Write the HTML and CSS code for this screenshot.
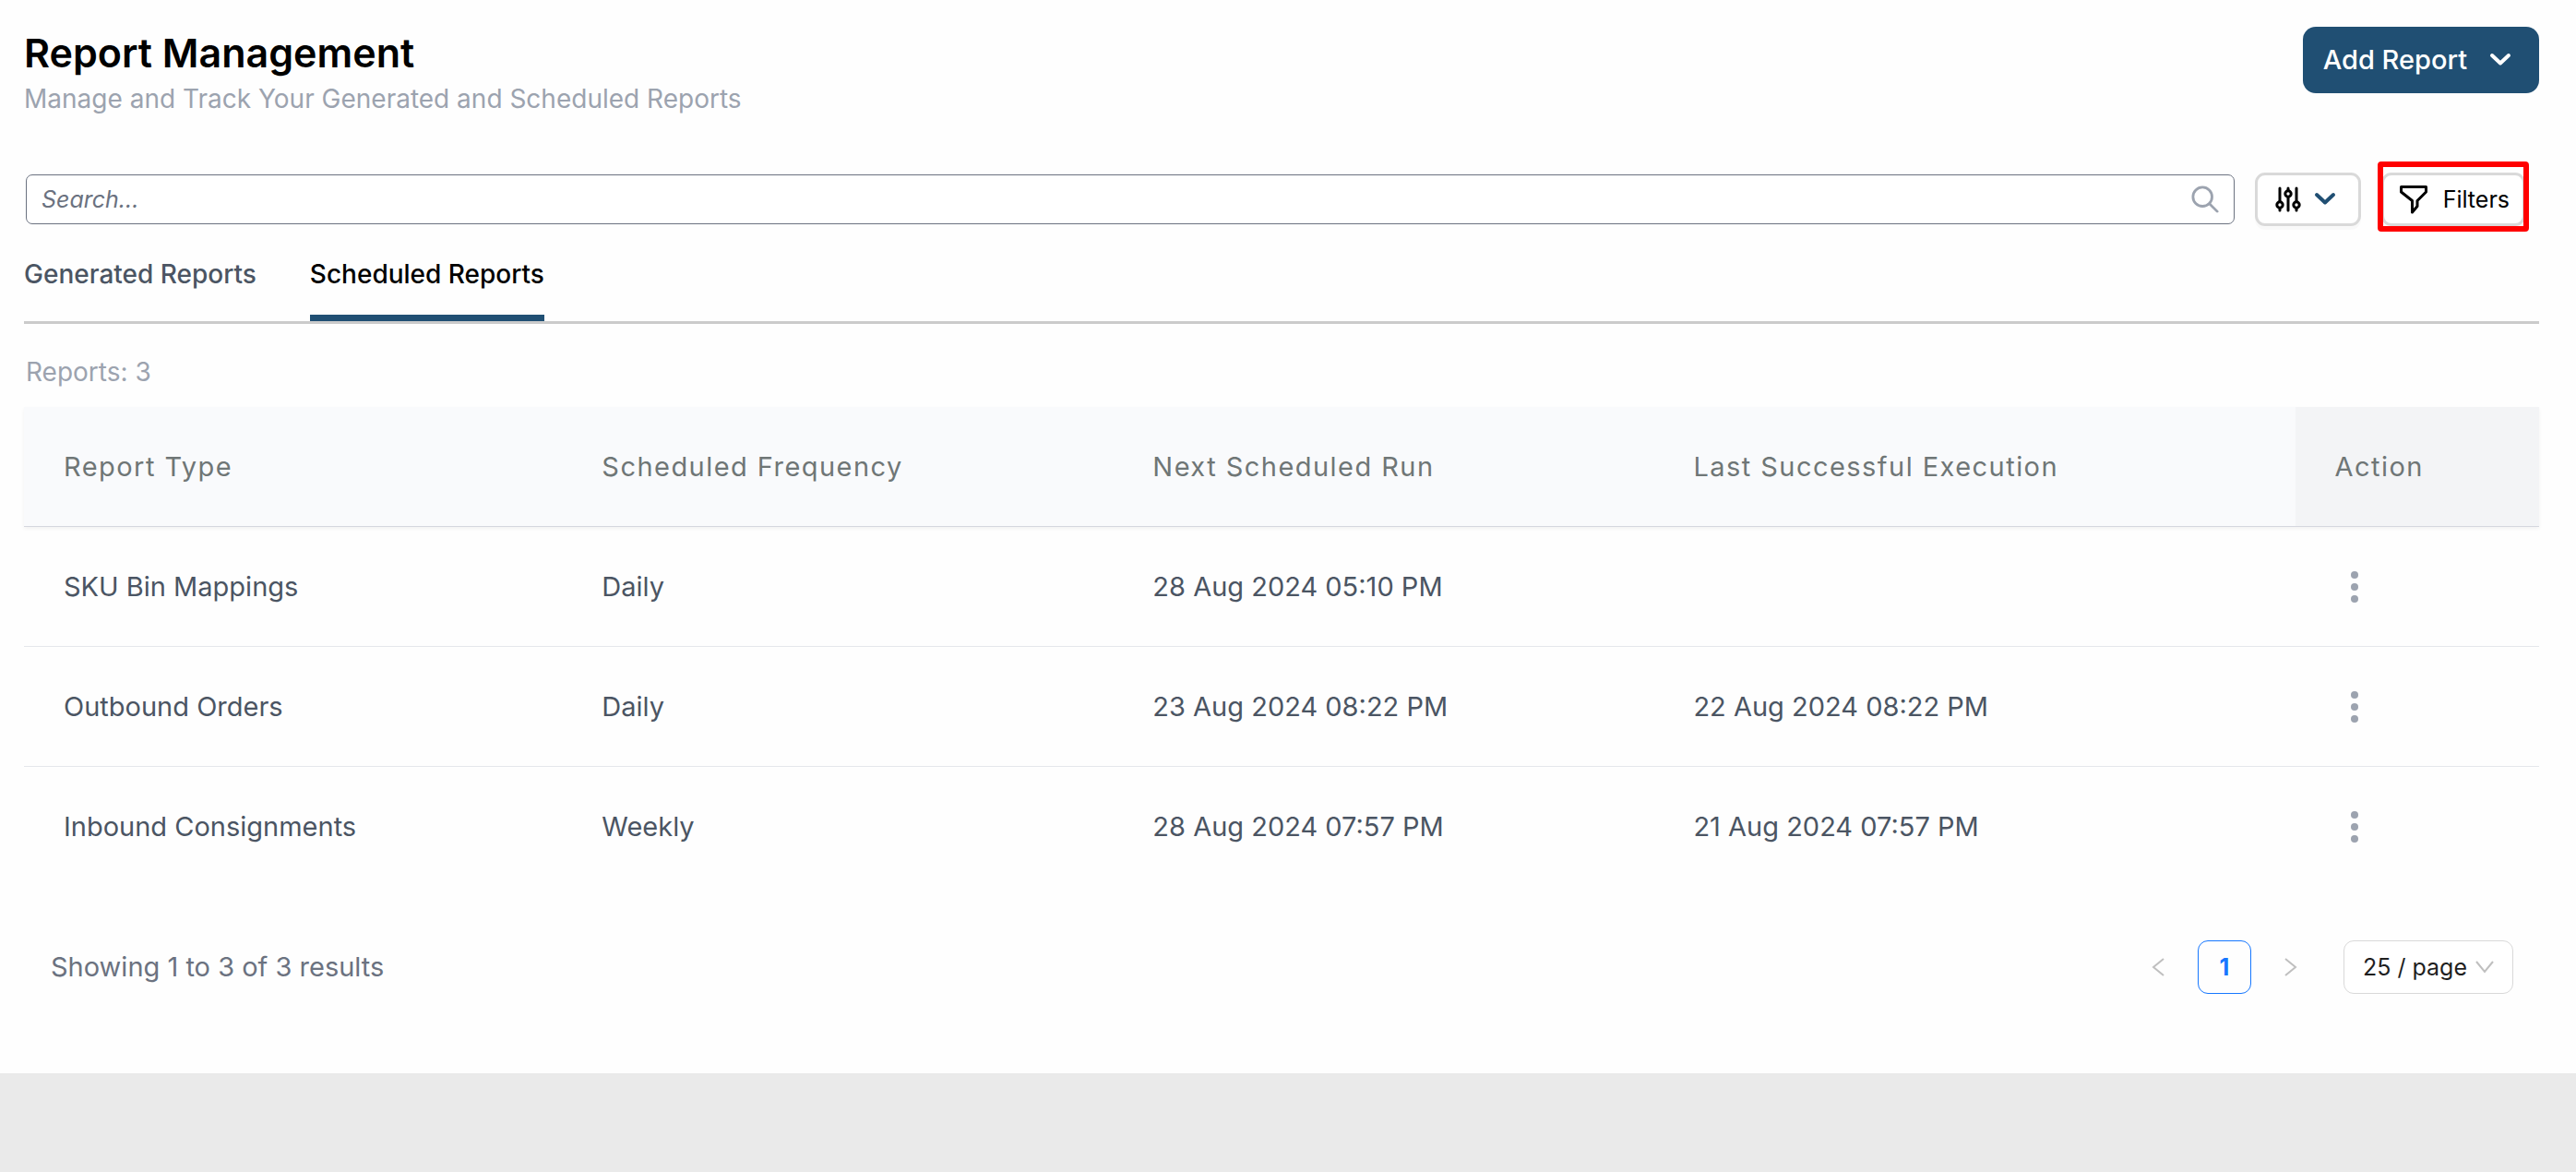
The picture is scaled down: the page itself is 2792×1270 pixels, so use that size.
FILE: index.html
```html
<!DOCTYPE html>
<html lang="en">
<head>
<meta charset="utf-8">
<meta name="viewport" content="width=device-width, initial-scale=1">
<title>Report Management</title>
<link rel="stylesheet" href="styles.css">
</head>
<body>
<main class="page">
  <header class="page-header">
    <div class="heading">
      <h1 class="title">Report Management</h1>
      <p class="subtitle">Manage and Track Your Generated and Scheduled Reports</p>
    </div>
    <button class="add-button" type="button">
      Add Report
      <svg class="chevron" viewBox="0 0 24 16" aria-hidden="true"><path d="M3 3l9 8.500 9-8.500"/></svg>
    </button>
  </header>

  <div class="toolbar">
    <label class="search">
      <input class="search-input" type="search" placeholder="Search..." aria-label="Search reports">
      <svg class="search-icon" viewBox="0 0 32 32" aria-hidden="true"><circle cx="13" cy="13" r="11"/><path d="M21 21l9 9"/></svg>
    </label>
    <button class="tool-button columns-button" type="button" aria-label="Columns">
      <svg class="sliders-icon" viewBox="0 0 28 28" aria-hidden="true">
        <path d="M5 2v14.500M5 23.500V26M14 2v2.500M14 11.500V26M23 2v14.500M23 23.500V26"/>
        <circle cx="5" cy="20" r="3.200"/><circle cx="14" cy="8" r="3.200"/><circle cx="23" cy="20" r="3.200"/>
      </svg>
      <svg class="chevron chevron-blue" viewBox="0 0 24 16" aria-hidden="true"><path d="M3 3l9 8.500 9-8.500"/></svg>
    </button>
    <div class="filters-wrap">
      <button class="tool-button filters-button" type="button">
        <svg class="funnel-icon" viewBox="0 0 32 32" aria-hidden="true"><path d="M2.500 2.500h27v5.500l-9.500 9.500v6l-5.500 6.500v-12.500l-12-9.500z"/></svg>
        Filters
      </button>
      <span class="highlight"></span>
    </div>
  </div>

  <nav class="tabs">
    <a class="tab" href="#generated">Generated Reports</a>
    <a class="tab tab-active" href="#scheduled" aria-current="page">Scheduled Reports</a>
  </nav>

  <p class="count">Reports: 3</p>

  <table class="reports">
    <colgroup><col class="col-type"><col class="col-frequency"><col class="col-next"><col class="col-last"><col class="col-action"></colgroup>
    <thead>
      <tr><th>Report Type</th><th>Scheduled Frequency</th><th>Next Scheduled Run</th><th>Last Successful Execution</th><th class="action-head">Action</th></tr>
    </thead>
    <tbody>
      <tr><td>SKU Bin Mappings</td><td>Daily</td><td>28 Aug 2024 05:10 PM</td><td></td>
        <td><button class="row-menu" type="button" aria-label="Actions for SKU Bin Mappings"><svg class="dots" viewBox="0 0 8 34" aria-hidden="true"><circle cx="4" cy="4" r="4"/><circle cx="4" cy="17" r="4"/><circle cx="4" cy="30" r="4"/></svg></button></td></tr>
      <tr><td>Outbound Orders</td><td>Daily</td><td>23 Aug 2024 08:22 PM</td><td>22 Aug 2024 08:22 PM</td>
        <td><button class="row-menu" type="button" aria-label="Actions for Outbound Orders"><svg class="dots" viewBox="0 0 8 34" aria-hidden="true"><circle cx="4" cy="4" r="4"/><circle cx="4" cy="17" r="4"/><circle cx="4" cy="30" r="4"/></svg></button></td></tr>
      <tr><td>Inbound Consignments</td><td>Weekly</td><td>28 Aug 2024 07:57 PM</td><td>21 Aug 2024 07:57 PM</td>
        <td><button class="row-menu" type="button" aria-label="Actions for Inbound Consignments"><svg class="dots" viewBox="0 0 8 34" aria-hidden="true"><circle cx="4" cy="4" r="4"/><circle cx="4" cy="17" r="4"/><circle cx="4" cy="30" r="4"/></svg></button></td></tr>
    </tbody>
  </table>

  <footer class="table-footer">
    <p class="results">Showing 1 to 3 of 3 results</p>
    <div class="pager">
      <button class="page-arrow" type="button" aria-label="Previous page" disabled><svg class="arrow-icon" viewBox="0 0 14 20" aria-hidden="true"><path d="M13 1L2 10l11 9"/></svg></button>
      <button class="page-number" type="button" aria-current="page">1</button>
      <button class="page-arrow" type="button" aria-label="Next page" disabled><svg class="arrow-icon" viewBox="0 0 14 20" aria-hidden="true"><path d="M1 1l11 9L1 19"/></svg></button>
      <div class="page-size">
        <select class="page-select" aria-label="Rows per page"><option>25 / page</option><option>50 / page</option><option>100 / page</option></select>
        <svg class="select-arrow" viewBox="0 0 20 14" aria-hidden="true"><path d="M1 1l9 11 9-11"/></svg>
      </div>
    </div>
  </footer>
</main>
</body>
</html>
```
FILE: styles.css
```css
* {
  box-sizing: border-box;
}

body {
  margin: 0;
  background: #eaeaea;
  color: #000;
  font-family: Inter, "Liberation Sans", sans-serif;
  font-size: 29px;
  line-height: 44px;
}

h1,
p {
  margin: 0;
}

button,
input,
select {
  margin: 0;
  color: inherit;
  font: inherit;
}

svg {
  display: block;
  flex: none;
  fill: none;
  stroke: currentColor;
}

.page {
  padding: 29px 40px 86px 26px;
  background: #fefefe;
}

.page-header {
  display: flex;
  justify-content: space-between;
  align-items: flex-start;
  margin-bottom: 58px;
}

.title {
  font-size: 43px;
  font-weight: 600;
  line-height: 56px;
}

.subtitle {
  color: #9ca3af;
  font-size: 28px;
}

.add-button {
  display: flex;
  align-items: center;
  gap: 24px;
  height: 72px;
  padding: 0 30px 0 22px;
  border: 0;
  border-radius: 14px;
  background: #204f73;
  color: #fff;
  font-weight: 500;
}

.chevron {
  width: 24px;
  height: 16px;
  stroke-width: 4;
  stroke-linecap: round;
  stroke-linejoin: round;
}

.chevron-blue {
  color: #204f73;
}

.toolbar {
  display: flex;
  align-items: center;
  gap: 22px;
  padding: 0 15px 0 2px;
}

.search {
  display: flex;
  flex: 1;
  align-items: center;
  height: 54px;
  padding: 0 16px;
  border: 1px solid #6b7280;
  border-radius: 7px;
  background: #fff;
}

.search-input {
  flex: 1;
  min-width: 0;
  padding: 0;
  border: 0;
  outline: 0;
  background: none;
  font-size: 25px;
  line-height: 40px;
}

.search-input::placeholder {
  color: #6b7280;
  font-style: italic;
  opacity: 1;
}

.search-icon {
  width: 30px;
  height: 30px;
  color: #9ca3af;
  stroke-width: 3;
  stroke-linecap: round;
}

.tool-button {
  display: flex;
  align-items: center;
  height: 58px;
  border: 3px solid #d9d9d9;
  border-radius: 11px;
  background: #fff;
  box-shadow: 0 4px 0 rgba(0, 0, 0, 0.02);
  font-size: 25px;
}

.columns-button {
  gap: 14px;
  padding: 0 24px 0 19px;
}

.sliders-icon {
  width: 28px;
  height: 28px;
  stroke-width: 3;
  stroke-linecap: round;
}

.filters-wrap {
  position: relative;
}

.filters-button {
  gap: 16px;
  padding: 0 14px 0 16px;
}

.funnel-icon {
  width: 32px;
  height: 32px;
  stroke-width: 3;
  stroke-linejoin: round;
}

.highlight {
  position: absolute;
  inset: -12px -4px -6px -4px;
  border: 6px solid #f00;
  border-radius: 4px;
  pointer-events: none;
}

.tabs {
  display: flex;
  gap: 58px;
  margin-top: 30px;
  border-bottom: 3px solid #cbcbcb;
  font-size: 28px;
}

.tab {
  padding-bottom: 22px;
  border-bottom: 7px solid transparent;
  color: #4b5563;
  font-weight: 500;
  text-decoration: none;
}

.tab-active {
  border-bottom-color: #204f73;
  color: #000;
}

.count {
  margin: 30px 0 16px;
  padding-left: 2px;
  color: #9ca3af;
  font-size: 28px;
}

.reports {
  width: 100%;
  border-collapse: separate;
  border-spacing: 0;
  table-layout: fixed;
  color: #4b5563;
}

.col-type { width: 21.4%; }
.col-frequency { width: 21.9%; }
.col-next { width: 21.5%; }
.col-last { width: 25.5%; }
.col-action { width: 9.7%; }

.reports thead {
  box-shadow: 0 2px 4px rgba(0, 0, 0, 0.05);
}

.reports th,
.reports td {
  padding: 43px 0 42px 43px;
  border-bottom: 1px solid #e5e7eb;
  text-align: left;
}

.reports th {
  border-bottom-color: #d5d7de;
  background: #f9fafc;
  color: #6f7676;
  font-weight: 400;
  letter-spacing: 0.05em;
}

.reports .action-head {
  background: #f3f4f6;
}

.reports tbody tr:last-child td {
  border-bottom: 0;
}

.row-menu {
  display: block;
  height: 44px;
  padding: 0 17px;
  border: 0;
  background: none;
  color: #9ca3af;
}

.dots {
  width: 8px;
  height: 34px;
  fill: currentColor;
  stroke: none;
}

.table-footer {
  display: flex;
  justify-content: space-between;
  align-items: center;
  padding: 59px 28px 0 29px;
}

.results {
  color: #6b7280;
}

.pager {
  display: flex;
  align-items: center;
  gap: 14px;
  font-size: 25px;
}

.page-arrow,
.page-number {
  display: flex;
  align-items: center;
  justify-content: center;
  width: 58px;
  height: 58px;
  padding: 0;
  border: 0;
  border-radius: 11px;
  background: none;
  color: #bfbfbf;
}

.page-number {
  border: 1px solid #1677ff;
  color: #1677ff;
  font-weight: 700;
}

.arrow-icon {
  width: 14px;
  height: 20px;
  stroke-width: 2;
}

.page-size {
  position: relative;
  margin-left: 14px;
}

.page-select {
  width: 184px;
  height: 58px;
  padding: 0 20px;
  border: 1px solid #d9d9d9;
  border-radius: 11px;
  background: #fff;
  color: #1f1f1f;
  appearance: none;
}

.select-arrow {
  position: absolute;
  top: 22px;
  right: 21px;
  width: 20px;
  height: 14px;
  color: #bfbfbf;
  stroke-width: 2;
  pointer-events: none;
}
```
